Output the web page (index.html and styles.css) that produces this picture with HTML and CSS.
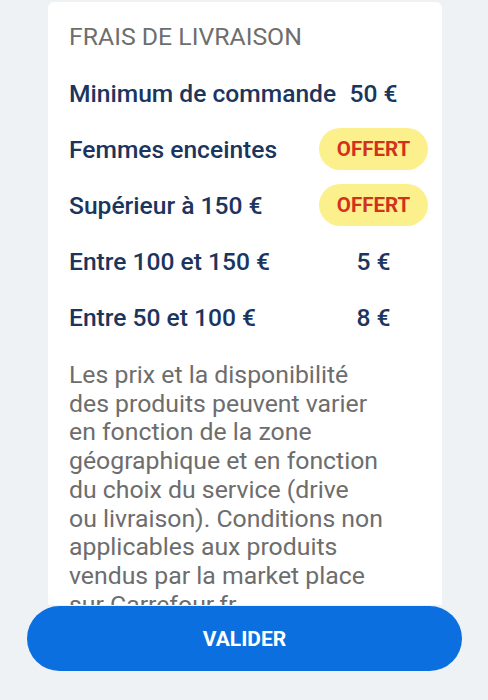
FILE: index.html
```html
<!DOCTYPE html>
<html lang="fr">
<head>
<meta charset="utf-8">
<title>Frais de livraison</title>
<link rel="stylesheet" href="styles.css">
</head>
<body>
<div class="screen">
  <section class="card">
    <h1 class="title">FRAIS DE LIVRAISON</h1>
    <ul class="rows">
      <li class="row"><span class="label">Minimum de commande</span><span class="value">50 €</span></li>
      <li class="row"><span class="label">Femmes enceintes</span><span class="value"><span class="pill">OFFERT</span></span></li>
      <li class="row"><span class="label">Supérieur à 150 €</span><span class="value"><span class="pill">OFFERT</span></span></li>
      <li class="row"><span class="label">Entre 100 et 150 €</span><span class="value">5 €</span></li>
      <li class="row"><span class="label">Entre 50 et 100 €</span><span class="value">8 €</span></li>
    </ul>
    <p class="note">Les prix et la disponibilité<br>des produits peuvent varier<br>en fonction de la zone<br>géographique et en fonction<br>du choix du service (drive<br>ou livraison). Conditions non<br>applicables aux produits<br>vendus par la market place<br>sur Carrefour.fr.</p>
  </section>
  <button class="btn" type="button">VALIDER</button>
</div>
</body>
</html>
```
FILE: styles.css
```css
html, body {
  margin: 0;
  padding: 0;
}
body {
  background: #eef2f4;
  font-family: Roboto, "Noto Sans", "Liberation Sans", sans-serif;
  width: 488px;
  height: 700px;
  overflow: hidden;
}
.screen {
  display: flex;
  flex-direction: column;
  padding-top: 2px;
}
.card {
  margin: 0 46px 0 48px;
  height: 603px;
  overflow: hidden;
  background: #ffffff;
  border-radius: 6px 6px 0 0;
  padding: 20px 14px 0 21px;
  box-sizing: border-box;
}
.title {
  margin: 0 0 13px;
  font-size: 24.8px;
  line-height: 30px;
  font-weight: 400;
  color: #6e6e6e;
}
.rows {
  list-style: none;
  margin: 0;
  padding: 0;
}
.row {
  display: grid;
  grid-template-columns: minmax(0, 1fr) 109px;
  align-items: center;
  height: 56px;
}
.label {
  font-size: 24.6px;
  font-weight: 500;
  color: #1b355d;
  white-space: nowrap;
}
.value {
  display: flex;
  justify-content: center;
  font-size: 24.6px;
  font-weight: 500;
  color: #1b355d;
}
.pill {
  display: flex;
  align-items: center;
  justify-content: center;
  width: 109px;
  height: 42px;
  border-radius: 21px;
  background: #fcf08c;
  color: #d1311d;
  font-size: 20.5px;
  font-weight: 700;
}
.note {
  margin: 16px 0 0;
  font-size: 24.8px;
  line-height: 28.7px;
  color: #6d6d6d;
}
.btn {
  margin: 1px 26px 0 27px;
  height: 65px;
  border: 0;
  border-radius: 33px;
  background: #0b6fe0;
  color: #ffffff;
  font-family: Roboto, "Noto Sans", "Liberation Sans", sans-serif;
  font-size: 21px;
  font-weight: 700;
}
```
